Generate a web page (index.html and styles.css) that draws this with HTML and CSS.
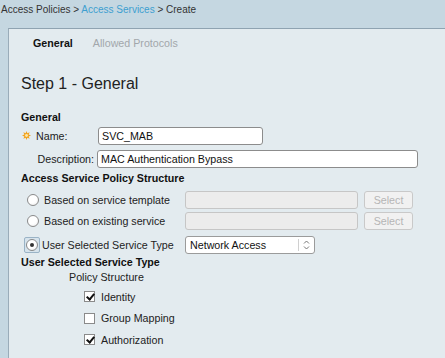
FILE: index.html
```html
<!DOCTYPE html>
<html lang="en">
<head>
    <meta charset="UTF-8">
    <title>Create Access Service</title>
    <link rel="stylesheet" href="styles.css">
</head>
<body>
    <div class="breadcrumb">
        Access Policies &gt; <a href="#">Access Services</a> &gt; Create
    </div>

    <div class="panel">
        <div class="tabs">
            <span class="tab active">General</span>
            <span class="tab">Allowed Protocols</span>
        </div>

        <h1>Step 1 - General</h1>

        <h2 class="first-heading">General</h2>
        <div class="field-row name-row">
            <label class="field-label required" for="name">
                <svg class="star" width="9" height="9" viewBox="0 0 10 10">
                    <path d="M5 0 L6 2.6 L8.5 1.5 L7.4 4 L10 5 L7.4 6 L8.5 8.5 L6 7.4 L5 10 L4 7.4 L1.5 8.5 L2.6 6 L0 5 L2.6 4 L1.5 1.5 L4 2.6 Z" fill="#f2a21e"/>
                    <circle cx="5" cy="5" r="1.6" fill="#fde7a8"/>
                </svg>
                Name:
            </label>
            <input type="text" id="name" class="text-input name-input" value="SVC_MAB">
        </div>
        <div class="field-row">
            <label class="field-label" for="desc">Description:</label>
            <input type="text" id="desc" class="text-input desc-input" value="MAC Authentication Bypass">
        </div>

        <h2 class="structure-heading">Access Service Policy Structure</h2>
        <div class="radio-list">
            <div class="radio-row">
                <label class="radio-label"><span class="radio"></span>Based on service template</label>
                <input type="text" class="text-input picker-input" disabled>
                <button class="select-btn" disabled>Select</button>
            </div>
            <div class="radio-row">
                <label class="radio-label"><span class="radio"></span>Based on existing service</label>
                <input type="text" class="text-input picker-input" disabled>
                <button class="select-btn" disabled>Select</button>
            </div>
            <div class="radio-row">
                <label class="radio-label"><span class="radio-focus"><span class="radio checked"></span></span>User Selected Service Type</label>
                <div class="dropdown">
                    <span>Network Access</span>
                    <span class="dropdown-arrow">
                        <svg width="7" height="10" viewBox="0 0 7 10"><path d="M1 3.5 L3.5 1 L6 3.5 M1 6.5 L3.5 9 L6 6.5" fill="none" stroke="#777" stroke-width="1"/></svg>
                    </span>
                </div>
            </div>
        </div>

        <h2 class="type-heading">User Selected Service Type</h2>
        <div class="policy-title">Policy Structure</div>
        <div class="checks">
            <label class="check-row"><span class="checkbox checked"></span>Identity</label>
            <label class="check-row"><span class="checkbox"></span>Group Mapping</label>
            <label class="check-row"><span class="checkbox checked"></span>Authorization</label>
        </div>
    </div>
</body>
</html>
```

FILE: styles.css
```css
* {
    box-sizing: border-box;
    font-family: 'Liberation Sans', Arial, sans-serif;
}

body {
    margin: 0;
    background-color: #c5d7e1;
    color: #222;
    font-size: 10.7px;
    height: 358px;
    overflow: hidden;
    display: flex;
    flex-direction: column;
}

.breadcrumb {
    height: 28px;
    padding: 4px 0 0 1px;
    color: #333;
    font-size: 10px;
    flex-shrink: 0;
}

.breadcrumb a {
    color: #3d9fd0;
    text-decoration: none;
}

.panel {
    flex: 1;
    margin-left: 8px;
    border-top: 1px solid #8fa3b1;
    border-left: 1px solid #9aacb9;
    background-color: #e3ebef;
    padding: 8px 0 0 12px;
}

.tabs {
    display: flex;
    gap: 20px;
    padding-left: 12px;
}

.tab {
    color: #a2a7ab;
}

.tab.active {
    color: #111;
    font-weight: bold;
}

h1 {
    font-weight: normal;
    font-size: 16px;
    margin: 26px 0 0 0;
    color: #222;
}

h2 {
    font-size: 10.7px;
    font-weight: bold;
    margin: 0;
    color: #111;
}

.first-heading {
    margin-top: 18px;
}

.field-row {
    display: flex;
    align-items: center;
    height: 23px;
}

.name-row {
    margin-top: 1px;
}

.field-label {
    width: 76px;
    text-align: right;
    padding-right: 3px;
}

.field-label.required {
    text-align: left;
    padding-left: 1px;
    display: flex;
    align-items: center;
    gap: 5px;
}

.text-input {
    height: 18px;
    border: 1px solid #8c8c8c;
    border-radius: 3px;
    background: #fff;
    font-size: 10.7px;
    padding: 0 3px;
    color: #111;
}

.name-input {
    width: 165px;
    margin-left: 1px;
}

.desc-input {
    width: 321px;
}

.structure-heading {
    margin-top: 2px;
}

.radio-list {
    margin-top: 5px;
}

.radio-row {
    display: flex;
    align-items: center;
    height: 21px;
    padding-left: 5px;
}

.radio-row:last-child {
    height: 25px;
    padding-top: 2px;
}

.radio-label {
    width: 159px;
    flex-shrink: 0;
    white-space: nowrap;
    display: flex;
    align-items: center;
    gap: 4px;
}

.radio {
    display: inline-block;
    width: 12px;
    height: 12px;
    margin: 0 1px;
    border-radius: 50%;
    border: 1px solid #8a8a8a;
    background: radial-gradient(circle at 40% 35%, #fff 0%, #fff 50%, #e6e6e6 100%);
    position: relative;
}

.radio.checked::after {
    content: "";
    position: absolute;
    left: 3px;
    top: 3px;
    width: 4px;
    height: 4px;
    border-radius: 50%;
    background: #333;
}

.radio-focus {
    display: inline-flex;
    align-items: center;
    justify-content: center;
    width: 16px;
    height: 16px;
    margin: 0 -2px;
    border: 1px solid #9ab3c6;
    border-radius: 2px;
    background: #d6e3ec;
}

.radio-focus .radio {
    margin: 0;
}

.picker-input {
    width: 173px;
    background: #ececec;
    border-color: #c6c6c6;
}

.select-btn {
    margin-left: 6px;
    width: 49px;
    height: 18px;
    border: 1px solid #c9c9c9;
    border-radius: 3px;
    background: #f1f1f1;
    color: #b5b5b5;
    font-size: 10.7px;
    padding: 0;
}

.dropdown {
    width: 130px;
    height: 18px;
    border: 1px solid #9b9b9b;
    border-radius: 3px;
    background: #fff;
    display: flex;
    align-items: center;
    justify-content: space-between;
    padding-left: 4px;
    color: #111;
}

.dropdown-arrow {
    width: 16px;
    height: 12px;
    border-left: 1px solid #d0d0d0;
    display: flex;
    align-items: center;
    justify-content: center;
}

.type-heading {
    margin-top: 0;
}

.policy-title {
    padding-left: 48px;
    margin-top: 3px;
}

.checks {
    display: flex;
    flex-direction: column;
    padding-left: 63px;
    margin-top: 3px;
}

.check-row {
    display: flex;
    align-items: center;
    height: 21.5px;
}

.checkbox {
    display: inline-block;
    width: 11px;
    height: 11px;
    margin-right: 6px;
    border: 1px solid #8a8a8a;
    background: #fff;
    position: relative;
}

.checkbox.checked::after {
    content: "";
    position: absolute;
    left: 3px;
    top: 0px;
    width: 3px;
    height: 6px;
    border: solid #111;
    border-width: 0 2px 2px 0;
    transform: rotate(40deg);
}
```
